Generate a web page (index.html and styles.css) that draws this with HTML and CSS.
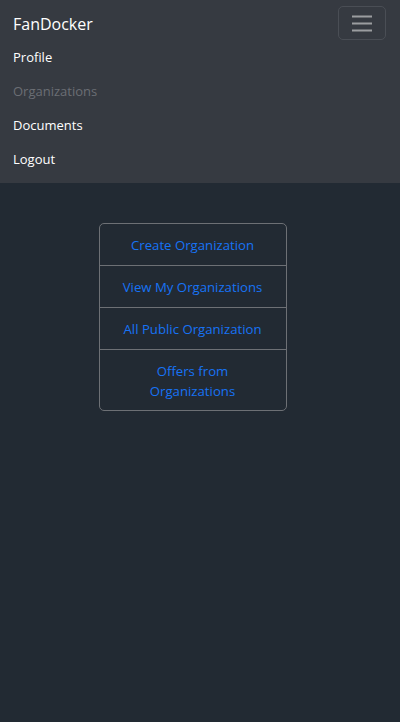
FILE: index.html
```html
<!DOCTYPE html>
<html>
<head>
<meta charset="utf-8">
<link rel="stylesheet" href="styles.css">
</head>
<body>
<nav class="navbar">
  <div class="bar">
    <span class="brand">FanDocker</span>
    <button class="toggler" aria-label="menu">
      <svg width="22" height="18" viewBox="0 0 22 18"><path d="M1 2.5h20M1 9.5h20M1 16.5h20" stroke="#9b9da0" stroke-width="2" fill="none"/></svg>
    </button>
  </div>
  <ul class="links">
    <li><a class="link">Profile</a></li>
    <li><a class="link disabled">Organizations</a></li>
    <li><a class="link">Documents</a></li>
    <li><a class="link">Logout</a></li>
  </ul>
</nav>
<main class="main">
  <div class="list">
    <a class="item">Create Organization</a>
    <a class="item">View My Organizations</a>
    <a class="item">All Public Organization</a>
    <a class="item">Offers from<br>Organizations</a>
  </div>
</main>
</body>
</html>
```
FILE: styles.css
```css
* { box-sizing: border-box; }
html, body { margin: 0; padding: 0; }
body {
  background: #222a33;
  font-family: "Open Sans", "Noto Sans", sans-serif;
  font-size: 13px;
  color: #fff;
  min-height: 722px;
}
.navbar {
  background: #363a41;
  height: 183px;
  padding: 6px 14px 0 13px;
}
.bar {
  display: flex;
  justify-content: space-between;
  align-items: flex-start;
  height: 40px;
}
.brand {
  font-size: 16px;
  line-height: 24px;
  margin-top: 6px;
  color: #fff;
}
.toggler {
  width: 48px;
  height: 34px;
  background: transparent;
  border: 1px solid #4a4e55;
  border-radius: 5px;
  display: flex;
  align-items: center;
  justify-content: center;
  padding: 0;
}
.links {
  list-style: none;
  margin: 0;
  padding: 0;
}
.link {
  display: block;
  height: 34px;
  line-height: 34px;
  color: #fff;
  margin-top: -6px;
  margin-bottom: 6px;
}
.link.disabled { color: #6b6e74; }
.main {
  padding: 40px 15px 0 0;
  display: flex;
  justify-content: center;
}
.list {
  width: 188px;
  border: 1px solid #6d7075;
  border-radius: 5px;
  display: flex;
  flex-direction: column;
}
.item {
  display: block;
  text-align: center;
  color: #1773f5;
  font-size: 13.2px;
  line-height: 20px;
  padding: 11px 8px 10px;
  border-top: 1px solid #6d7075;
}
.item:first-child { border-top: none; padding-top: 11px; padding-bottom: 10px; }
.item:last-child { padding-bottom: 9px; }
```
